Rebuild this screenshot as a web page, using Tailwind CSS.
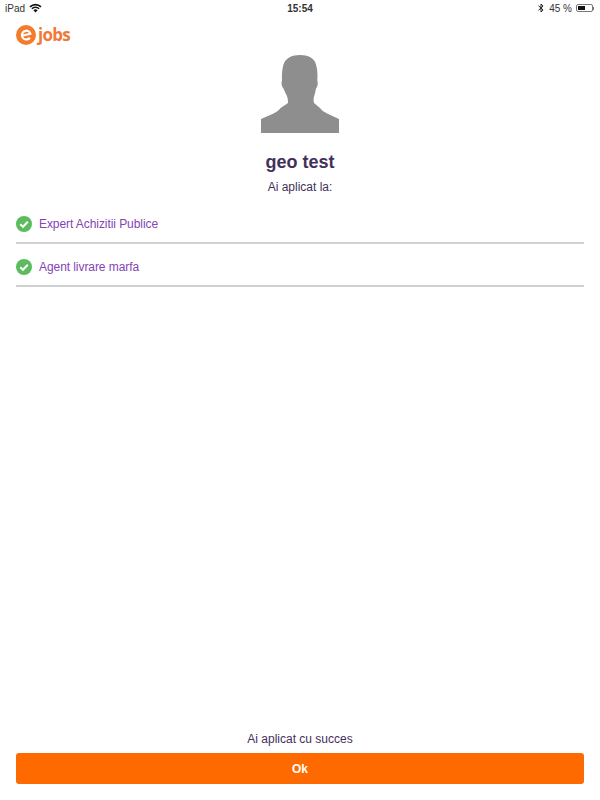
<!DOCTYPE html>
<html lang="ro">
<head>
  <meta charset="UTF-8" />
  <title>eJobs</title>
  <script src="https://cdn.jsdelivr.net/npm/@tailwindcss/browser@4"></script>
</head>
<body class="bg-white font-['Liberation_Sans',Arial,sans-serif]">
  <div class="w-[600px] h-[800px] flex flex-col overflow-hidden">
    <!-- Status bar -->
    <div class="h-[16px] px-[5px] flex items-center justify-between relative text-[10px] text-[#333]">
      <div class="flex items-center gap-[4px]">
        <span>iPad</span>
        <svg width="13" height="10" viewBox="0 0 13 10"><path d="M6.5 9.5 L4.4 7.2 A3 3 0 0 1 8.6 7.2 Z" fill="#111"/><path d="M1 3.9 A7.8 7.8 0 0 1 12 3.9" fill="none" stroke="#111" stroke-width="1.6"/><path d="M2.9 5.8 A5 5 0 0 1 10.1 5.8" fill="none" stroke="#111" stroke-width="1.6"/></svg>
      </div>
      <span class="absolute left-0 right-0 text-center font-bold text-[10px] text-[#333]">15:54</span>
      <div class="flex items-center gap-[3px] pr-[1px]">
        <svg width="6" height="10" viewBox="0 0 6 10"><path d="M0.5 2.7 L5 6.9 L3 9 V1 L5 3.1 L0.5 7.3" fill="none" stroke="#222" stroke-width="1"/></svg>
        <span class="ml-[2px]">45 %</span>
        <div class="flex items-center ml-[1px]">
          <div class="w-[17px] h-[8px] border border-[#777] rounded-[2px] p-[1px]"><div class="h-full w-[7px] bg-[#111]"></div></div>
          <div class="w-[1px] h-[3px] bg-[#777]"></div>
        </div>
      </div>
    </div>

    <!-- Logo -->
    <div class="h-[37px] pl-[16px] pt-[9px] flex items-start gap-[2px]">
      <svg width="20" height="20" viewBox="0 0 20 20" class="shrink-0">
        <circle cx="10" cy="10" r="10" fill="#f47a2c"/>
        <path d="M6 10.7 L14.4 8.8 C13.8 6.6 11.6 5.4 9.6 5.8 C7.2 6.2 5.6 8.4 6 10.8 C6.4 13.2 8.6 14.8 11 14.4 C12.2 14.2 13.2 13.6 13.9 12.7" fill="none" stroke="#fff" stroke-width="2.2"/>
      </svg>
      <span class="text-[17px] leading-[20px] font-['Open_Sans',sans-serif] font-bold text-[#f0793a] tracking-[-0.7px]">jobs</span>
    </div>

    <!-- Avatar -->
    <div class="flex justify-center pt-[2px]">
      <svg width="78" height="78" viewBox="0 0 78 78">
        <path d="M0 78 V64 L12.6 58.5 C15.5 57 17.5 55.5 19.6 53 L27 48 C27.3 44 26 41 25 39 C24 37 23 35 22.5 33.5 C21 32 20 28 21 25.5 C20.8 20 21 14 22.5 9.5 C24.5 3 31 0 39 0 C47 0 53.5 3 55 9.5 C56.5 14 56.7 20 56.3 25.5 C57.3 28 56.5 32 55 33.5 C54.5 36 54 39 53 41.5 C52.5 44 52.5 46 53 48 L59 53 C61 55.5 63 57 66 58.5 L78 64 V78 Z" fill="#8e8e8e"/>
      </svg>
    </div>

    <!-- Name -->
    <h1 class="mt-[17px] text-center text-[18px] leading-[24px] font-bold text-[#43305a]">geo test</h1>
    <p class="mt-[5px] text-center text-[12px] leading-[16px] text-[#43305a]">Ai aplicat la:</p>

    <!-- Jobs list -->
    <ul class="mt-[6px] px-[16px]">
      <li class="h-[43px] flex items-center gap-[7px] border-b-2 border-[#d0d0d0] pt-[4px]">
        <svg width="16" height="16" viewBox="0 0 16 16"><circle cx="8" cy="8" r="8" fill="#5cbb5c"/><path d="M4.2 8.2 L7 10.8 L11.8 5.8" fill="none" stroke="#fff" stroke-width="2"/></svg>
        <span class="text-[12px] tracking-[-0.07px] text-[#8344b5]">Expert Achizitii Publice</span>
      </li>
      <li class="h-[43px] flex items-center gap-[7px] border-b-2 border-[#d0d0d0] pt-[4px]">
        <svg width="16" height="16" viewBox="0 0 16 16"><circle cx="8" cy="8" r="8" fill="#5cbb5c"/><path d="M4.2 8.2 L7 10.8 L11.8 5.8" fill="none" stroke="#fff" stroke-width="2"/></svg>
        <span class="text-[12px] tracking-[-0.07px] text-[#8344b5]">Agent livrare marfa</span>
      </li>
    </ul>

    <!-- Footer -->
    <div class="mt-auto px-[16px] pb-[16px]">
      <p class="text-center text-[12px] leading-[16px] text-[#43305a] mb-[6px]">Ai aplicat cu succes</p>
      <button class="w-full h-[31px] bg-[#ff6a00] rounded-[3px] text-white text-[12px] font-bold">Ok</button>
    </div>
  </div>
</body>
</html>
